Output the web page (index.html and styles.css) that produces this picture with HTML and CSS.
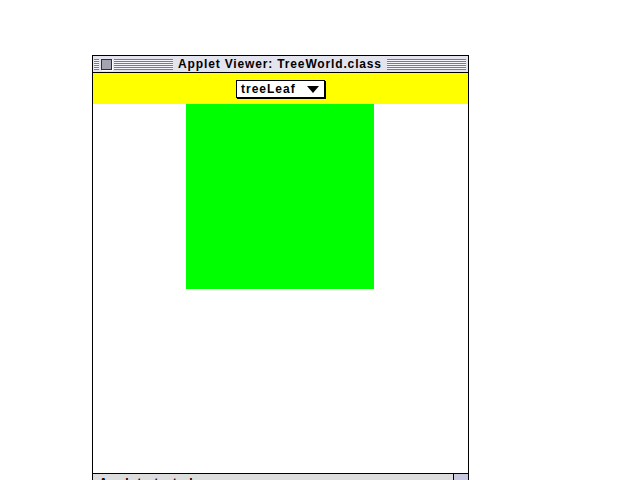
FILE: index.html
```html
<!DOCTYPE html>
<html lang="en">
<head>
<meta charset="utf-8">
<title>Applet Viewer: TreeWorld.class</title>
<link rel="stylesheet" href="styles.css">
</head>
<body>
<div class="window">
  <div class="titlebar">
    <div class="title_side">
      <div class="stripes stripes_short"></div>
      <div class="closebox"></div>
      <div class="stripes"></div>
    </div>
    <div class="title">Applet Viewer: TreeWorld.class</div>
    <div class="title_side">
      <div class="stripes"></div>
    </div>
  </div>
  <div class="toolbar">
    <div class="choice">
      <span class="choice_text">treeLeaf</span>
      <span class="choice_arrow"></span>
    </div>
  </div>
  <div class="canvas">
    <div class="leaf"></div>
  </div>
  <div class="statusbar">
    <div class="status_text">Applet started.</div>
    <div class="growbox"></div>
  </div>
</div>
</body>
</html>
```

FILE: styles.css
```css
body {
  margin: 0;
  background: #ffffff;
  overflow: hidden;
  font-family: "Liberation Sans", Arial, sans-serif;
}

.window {
  margin: 55px 0 0 92px;
  width: 375px;
  border: 1px solid #000;
  background: #fff;
}

.titlebar {
  height: 16px;
  border-bottom: 1px solid #000;
  background: #e4e4ee;
  display: grid;
  grid-template-columns: 1fr auto 1fr;
  align-items: center;
  padding: 0 2px 0 1px;
}

.title_side {
  display: flex;
  align-items: center;
  gap: 2px;
}

.stripes {
  flex: 1;
  height: 11px;
  background: repeating-linear-gradient(to bottom, #7a7a88 0, #7a7a88 1px, #f4f4fa 1px, #f4f4fa 2px);
}

.stripes_short {
  flex: 0 0 5px;
}

.closebox {
  width: 9px;
  height: 9px;
  border: 1px solid #2a2a5a;
  background: #a4a4b0;
  box-shadow: 1px 1px 0 #ffffff;
}

.title {
  font-size: 12px;
  font-weight: bold;
  padding: 0 5px;
  letter-spacing: 0.85px;
  color: #000;
  white-space: nowrap;
}

.toolbar {
  height: 31px;
  background: #ffff00;
  display: flex;
  justify-content: center;
  align-items: center;
}

.choice {
  width: 79px;
  height: 16px;
  border: 1px solid #000;
  background: #fff;
  box-shadow: 1px 1px 0 #000;
  display: flex;
  align-items: center;
  justify-content: space-between;
  padding: 0 4px;
  margin-top: 1px;
}

.choice_text {
  font-size: 12px;
  font-weight: bold;
  letter-spacing: 1px;
}

.choice_arrow {
  width: 0;
  height: 0;
  border-left: 6px solid transparent;
  border-right: 6px solid transparent;
  border-top: 7px solid #000;
  margin-right: 1px;
}

.canvas {
  height: 369px;
  padding-left: 93px;
}

.leaf {
  width: 188px;
  height: 185px;
  background: #00ff00;
}

.statusbar {
  border-top: 1px solid #000;
  height: 15px;
  background: #dddddd;
  display: flex;
}

.status_text {
  flex: 1;
  font-size: 12px;
  font-weight: bold;
  letter-spacing: 1px;
  padding: 2px 0 0 6px;
  line-height: 14px;
}

.growbox {
  width: 14px;
  border-left: 1px solid #000;
  background: #c8c8e0;
}
```
